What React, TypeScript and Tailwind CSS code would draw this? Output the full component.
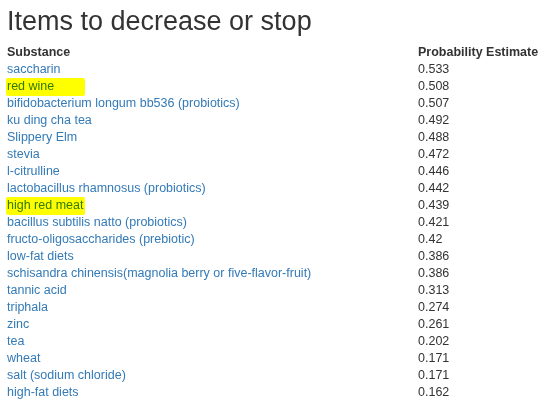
const rows: { name: string; p: string; mark?: boolean }[] = [
  { name: 'saccharin', p: '0.533' },
  { name: 'red wine', p: '0.508', mark: true },
  { name: 'bifidobacterium longum bb536 (probiotics)', p: '0.507' },
  { name: 'ku ding cha tea', p: '0.492' },
  { name: 'Slippery Elm', p: '0.488' },
  { name: 'stevia', p: '0.472' },
  { name: 'l-citrulline', p: '0.446' },
  { name: 'lactobacillus rhamnosus (probiotics)', p: '0.442' },
  { name: 'high red meat', p: '0.439', mark: true },
  { name: 'bacillus subtilis natto (probiotics)', p: '0.421' },
  { name: 'fructo-oligosaccharides (prebiotic)', p: '0.42' },
  { name: 'low-fat diets', p: '0.386' },
  { name: 'schisandra chinensis(magnolia berry or five-flavor-fruit)', p: '0.386' },
  { name: 'tannic acid', p: '0.313' },
  { name: 'triphala', p: '0.274' },
  { name: 'zinc', p: '0.261' },
  { name: 'tea', p: '0.202' },
  { name: 'wheat', p: '0.171' },
  { name: 'salt (sodium chloride)', p: '0.171' },
  { name: 'high-fat diets', p: '0.162' },
];

export default function App() {
  return (
    <div className="bg-white w-[546px] h-[412px] pl-[7px] text-[#333] font-['Liberation_Sans',Arial,sans-serif]">
      <h2 className="text-[27px] leading-[30px] pt-[6px] mb-[8px]">Items to decrease or stop</h2>
      <table className="text-[12.5px] leading-[17px] border-collapse whitespace-nowrap">
        <thead>
          <tr>
            <th className="text-left font-bold p-0 w-[411px]">Substance</th>
            <th className="text-left font-bold p-0">Probability Estimate</th>
          </tr>
        </thead>
        <tbody>
          {rows.map((r) => (
            <tr key={r.name}>
              <td className="p-0">
                <span className="relative">
                  <a href="#" className="text-[#337ab7]">{r.name}</a>
                  {r.mark && (
                    <span className="absolute left-[-1px] top-[-1px] w-[79px] h-[18px] bg-[#ffff00] mix-blend-multiply rounded-[2px]" />
                  )}
                </span>
              </td>
              <td className="p-0">{r.p}</td>
            </tr>
          ))}
        </tbody>
      </table>
    </div>
  );
}
